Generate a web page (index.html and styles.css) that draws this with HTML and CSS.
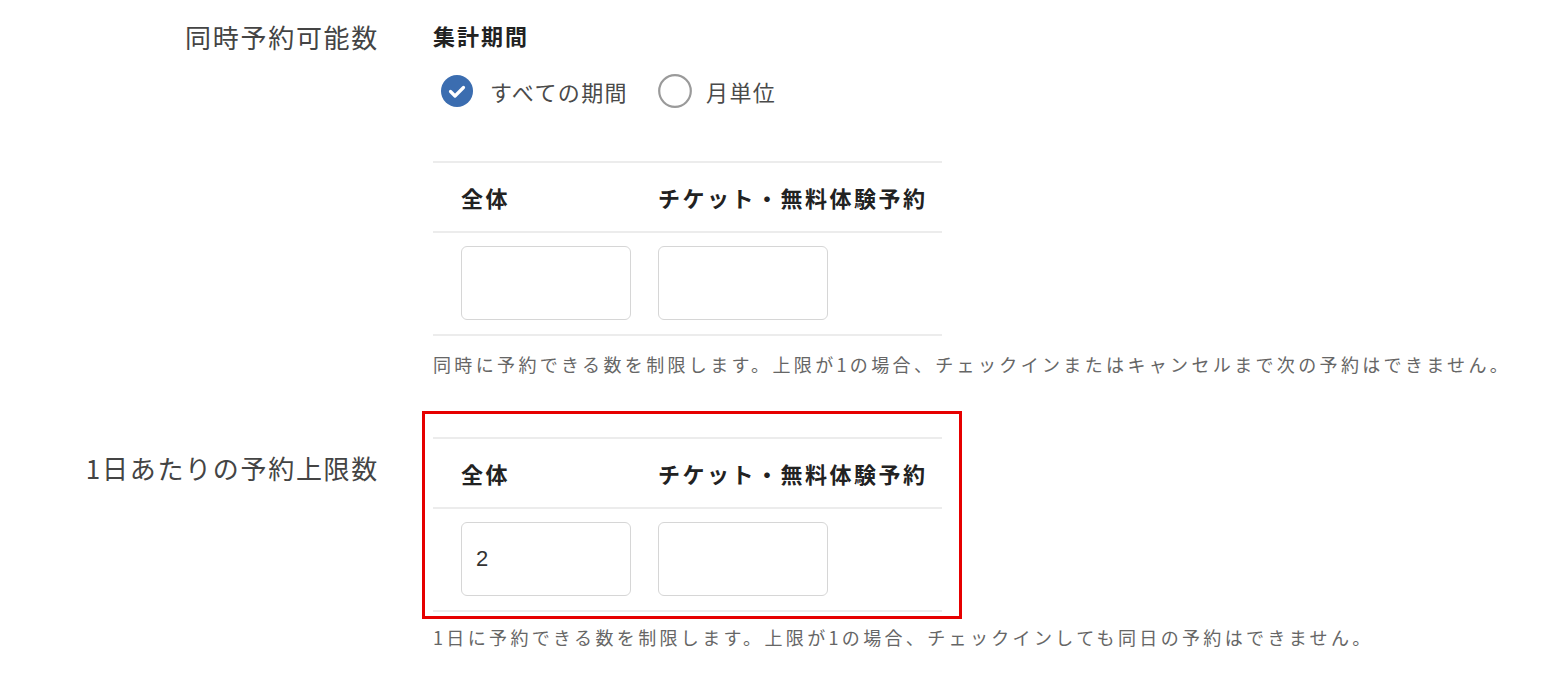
FILE: index.html
```html
<!DOCTYPE html>
<html lang="ja">
<head>
<meta charset="utf-8">
<title>予約上限設定</title>
<link rel="stylesheet" href="styles.css">
</head>
<body>
<div class="form">
  <div class="row row-concurrent">
    <div class="label">同時予約可能数</div>
    <div class="field">
      <div class="sub-title">集計期間</div>
      <div class="radios">
        <label class="radio">
          <svg class="radio-icon" width="32" height="32" viewBox="0 0 32 32"><circle cx="16" cy="16" r="16" fill="#3b6db0"/><path d="M9.5 16.5 L14 21 L22.5 12.5" fill="none" stroke="#fff" stroke-width="3.2" stroke-linecap="round" stroke-linejoin="round"/></svg>
          <span class="radio-text">すべての期間</span>
        </label>
        <label class="radio">
          <svg class="radio-icon" width="34" height="34" viewBox="0 0 34 34"><circle cx="17" cy="17" r="15.8" fill="#fff" stroke="#9a9a9a" stroke-width="2.2"/></svg>
          <span class="radio-text">月単位</span>
        </label>
      </div>
      <div class="limit-table">
        <div class="table-row head-row">
          <div class="cell col-total">全体</div>
          <div class="cell col-ticket">チケット・無料体験予約</div>
        </div>
        <div class="table-row body-row">
          <div class="cell col-total"><div class="input"></div></div>
          <div class="cell col-ticket"><div class="input"></div></div>
        </div>
      </div>
      <p class="help">同時に予約できる数を制限します。上限が1の場合、チェックインまたはキャンセルまで次の予約はできません。</p>
    </div>
  </div>
  <div class="row row-daily">
    <div class="label">1日あたりの予約上限数</div>
    <div class="field">
      <div class="highlight">
        <div class="limit-table">
          <div class="table-row head-row">
            <div class="cell col-total">全体</div>
            <div class="cell col-ticket">チケット・無料体験予約</div>
          </div>
          <div class="table-row body-row">
            <div class="cell col-total"><div class="input">2</div></div>
            <div class="cell col-ticket"><div class="input"></div></div>
          </div>
        </div>
      </div>
      <p class="help help-daily">1日に予約できる数を制限します。上限が1の場合、チェックインしても同日の予約はできません。</p>
    </div>
  </div>
</div>
</body>
</html>
```

FILE: styles.css
```css
html, body {
  margin: 0;
  padding: 0;
  background: #ffffff;
}

body {
  font-family: "Noto Sans CJK JP", "Noto Sans", sans-serif;
  color: #333333;
}

.form {
  padding-top: 20px;
}

.row {
  display: grid;
  grid-template-columns: 379px 1fr;
  column-gap: 54px;
}

.label {
  text-align: right;
  font-size: 26px;
  line-height: 30px;
  letter-spacing: 1.7px;
  color: #444444;
}

.row-concurrent .label {
  padding-top: 2px;
}

.row-daily {
  margin-top: 35px;
}

.row-daily .label {
  padding-top: 42px;
}

.field {
  display: flex;
  flex-direction: column;
  align-items: flex-start;
}

.sub-title {
  font-size: 22px;
  line-height: 30px;
  font-weight: 700;
  letter-spacing: 2px;
  color: #222222;
}

.radios {
  display: flex;
  align-items: center;
  margin-top: 25px;
  height: 32px;
}

.radio {
  display: flex;
  align-items: center;
}

.radio-icon {
  display: block;
  margin-left: 8px;
  margin-right: 17px;
}

.radio + .radio {
  margin-left: 30px;
}

.radio + .radio .radio-icon {
  margin-left: 0;
  margin-right: 14px;
}

.radio-text {
  font-size: 22px;
  line-height: 30px;
  letter-spacing: 1.4px;
  color: #4a4a4a;
}

.limit-table {
  width: 509px;
  border-top: 2px solid #ececec;
  border-bottom: 2px solid #ececec;
  margin-top: 54px;
}

.highlight .limit-table {
  margin-top: 0;
}

.table-row {
  display: flex;
  padding-left: 28px;
}

.col-total {
  width: 197px;
  flex: none;
}

.col-ticket {
  flex: 1;
}

.head-row {
  height: 68px;
  align-items: center;
  border-bottom: 2px solid #ececec;
}

.head-row .cell {
  font-size: 22px;
  font-weight: 700;
  letter-spacing: 2.5px;
  color: #222222;
  white-space: nowrap;
}

.body-row {
  padding-top: 13px;
  padding-bottom: 14px;
}

.input {
  width: 170px;
  height: 74px;
  box-sizing: border-box;
  border: 1.5px solid #d6d6d6;
  border-radius: 6px;
  background: #ffffff;
  font-family: "Liberation Sans", "Noto Sans", sans-serif;
  font-size: 22px;
  line-height: 71px;
  padding-left: 14px;
  color: #333333;
}

.help {
  margin: 16px 0 0 0;
  font-size: 18px;
  line-height: 24px;
  letter-spacing: 3.35px;
  color: #666666;
  white-space: nowrap;
}

.highlight {
  border: 3px solid #e60000;
  margin-left: -11px;
  padding: 23px 17px 4px 8px;
}

.help-daily {
  margin-top: 6px;
}
```
